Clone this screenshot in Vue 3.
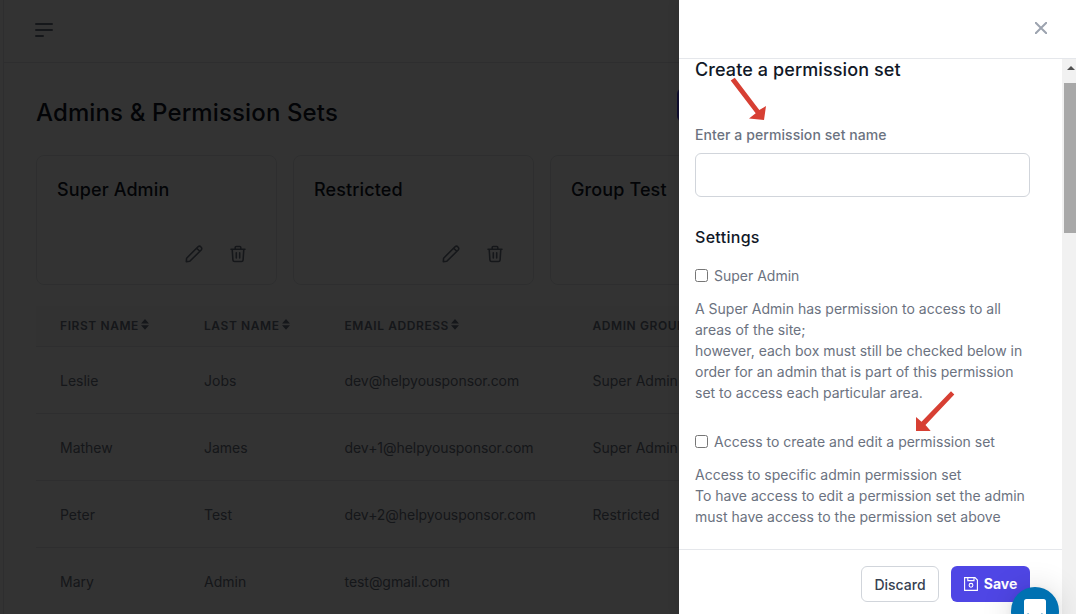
<script setup>
const cards = ['Super Admin', 'Restricted', 'Group Test']
const columns = [
  { label: 'First name', sortable: true },
  { label: 'Last name', sortable: true },
  { label: 'Email address', sortable: true },
  { label: 'Admin group', sortable: false },
]
const rows = [
  ['Leslie', 'Jobs', 'dev@helpyousponsor.com', 'Super Admin'],
  ['Mathew', 'James', 'dev+1@helpyousponsor.com', 'Super Admin'],
  ['Peter', 'Test', 'dev+2@helpyousponsor.com', 'Restricted'],
  ['Mary', 'Admin', 'test@gmail.com', ''],
]
</script>

<template>
  <div class="screen">
    <div class="page">
      <header class="topbar">
        <svg class="menu" width="18" height="14" viewBox="0 0 18 14">
          <path d="M1 1H17M1 7H17M1 13H8" stroke="currentColor" stroke-width="2" stroke-linecap="round" />
        </svg>
      </header>
      <main class="content">
        <div class="title-row">
          <h1>Admins &amp; Permission Sets</h1>
          <button class="create"></button>
        </div>
        <div class="cards">
          <section v-for="card in cards" :key="card" class="card">
            <h2>{{ card }}</h2>
            <div class="card-actions">
              <svg width="20" height="20" viewBox="0 0 20 20" fill="none" stroke="currentColor" stroke-width="1.6" stroke-linecap="round" stroke-linejoin="round">
                <path d="M2.3 17.7L2.6 14.2L14 2.8Q15.6 1.5 17 3Q18.4 4.4 17.2 6L5.8 17.3ZM12.7 4.2L15.8 7.3" />
              </svg>
              <svg width="20" height="20" viewBox="0 0 20 20" fill="none" stroke="currentColor" stroke-width="1.6" stroke-linecap="round" stroke-linejoin="round">
                <path d="M3 5.2H17M4.2 5.2L4.9 16Q5 17.5 6.5 17.5H13.5Q15 17.5 15.1 16L15.8 5.2M7.2 5V3.4Q7.2 2.5 8.1 2.5H11.9Q12.8 2.5 12.8 3.4V5M8.3 8.7V14M11.7 8.7V14" />
              </svg>
            </div>
          </section>
        </div>
        <div class="table">
          <div class="row head">
            <div v-for="col in columns" :key="col.label">
              {{ col.label }}<svg v-if="col.sortable" class="sort" width="8" height="11" viewBox="0 0 8 11">
                <path d="M4 0L8 4.5H0ZM0 6.2H8L4 10.7Z" fill="currentColor" />
              </svg>
            </div>
          </div>
          <div v-for="row in rows" :key="row[2]" class="row">
            <div v-for="(cell, i) in row" :key="i" :class="{ email: i === 2 }">{{ cell }}</div>
          </div>
        </div>
      </main>
    </div>
    <div class="backdrop"></div>

    <aside class="drawer">
      <header class="drawer-head">
        <svg width="12" height="12" viewBox="0 0 12 12">
          <path d="M.7 .7L11.3 11.3M11.3 .7L.7 11.3" stroke="currentColor" stroke-width="2" stroke-linecap="round" />
        </svg>
      </header>
      <div class="drawer-body">
        <div class="panel">
          <form class="form">
            <h3>Create a permission set</h3>
            <label class="field-label" for="set-name">Enter a permission set name</label>
            <input id="set-name" class="field" type="text" />
            <h4>Settings</h4>
            <label class="check"><span class="box"></span>Super Admin</label>
            <p>A Super Admin has permission to access to all<br />areas of the site;<br />however, each box must still be checked below in<br />order for an admin that is part of this permission<br />set to access each particular area.</p>
            <label class="check second"><span class="box"></span>Access to create and edit a permission set</label>
            <p>Access to specific admin permission set<br />To have access to edit a permission set the admin<br />must have access to the permission set above</p>
          </form>
          <footer class="drawer-foot">
            <button class="btn discard">Discard</button>
            <button class="btn save">
              <svg width="14" height="14" viewBox="0 0 14 14" fill="none" stroke="currentColor" stroke-width="1.1">
                <path d="M.6 .6H11L13.4 3V13.4H.6ZM3.8 .6V3.6H10V.6" />
                <circle cx="7" cy="8.3" r="1.9" />
              </svg>
              <span>Save</span>
            </button>
          </footer>
        </div>
        <div class="scrollbar">
          <svg class="up" width="8" height="4" viewBox="0 0 8 4"><path d="M4 0L8 4H0Z" fill="#505050" /></svg>
          <div class="thumb"></div>
        </div>
      </div>
    </aside>

    <svg class="arrows" width="1076" height="614" viewBox="0 0 1076 614" fill="#d73f33">
      <path d="M734.8 77.8L759.3 110L766 106L764 120L749 118.5L755.7 113.3L730.7 80.6Z" />
      <path d="M951 391.3L954.3 394.5L925.5 425L930.7 431H916V417L921.5 421.8Z" />
    </svg>
    <div class="chat">
      <svg width="22" height="24" viewBox="0 0 22 24">
        <path d="M2.5 0H19.5Q22 0 22 2.5V24L17 21H2.5Q0 21 0 18.5V2.5Q0 0 2.5 0Z" fill="#fff" />
        <path d="M4 15.1Q11 20 18 15.1" fill="none" stroke="#0071b2" stroke-width="1.4" stroke-linecap="round" />
      </svg>
    </div>
  </div>
</template>

<style>
body {
  overflow: hidden;
}
</style>

<style scoped>
* {
  box-sizing: border-box;
}
.screen {
  position: relative;
  width: 1076px;
  height: 614px;
  overflow: hidden;
  background: #fff;
  font-family: Inter, "Liberation Sans", sans-serif;
  font-size: 14px;
  line-height: 21px;
  color: #6b7280;
}
h1, h2, h3, h4, p {
  margin: 0;
  font-weight: 500;
}
.page {
  width: 1076px;
  height: 614px;
  padding-left: 3px;
  overflow: hidden;
}
.topbar {
  height: 63px;
  padding: 23px 0 0 31px;
  border-left: 1px solid #e5e7eb;
  border-bottom: 1px solid #e5e7eb;
}
.menu {
  display: block;
}
.content {
  height: 551px;
  padding: 25px 0 0 32px;
  border-left: 1px solid #e5e7eb;
}
.title-row {
  display: flex;
  width: 1000px;
  height: 67px;
}
h1 {
  width: 641px;
  padding-top: 9px;
  font-size: 24px;
  line-height: 32px;
  letter-spacing: .13px;
  color: #111827;
}
.create {
  width: 160px;
  height: 34px;
  padding: 0;
  border: 0;
  border-radius: 6px;
  background: #4f46e5;
}
.cards {
  display: flex;
  gap: 16px;
}
.card {
  flex: none;
  display: flex;
  flex-direction: column;
  justify-content: space-between;
  width: 241px;
  height: 130px;
  padding: 20px 28px 20px 20px;
  border: 1px solid #e5e7eb;
  border-radius: 8px;
}
.card h2 {
  font-size: 18px;
  line-height: 28px;
  letter-spacing: .12px;
  color: #111827;
}
.card-actions {
  display: flex;
  justify-content: flex-end;
  gap: 24px;
}
.table {
  width: 1000px;
  margin-top: 21px;
}
.row {
  display: grid;
  grid-template-columns: 144px 140.5px 248px 1fr;
  align-items: center;
  height: 67px;
  padding-left: 24px;
  border-bottom: 1px solid #e5e7eb;
}
.head {
  height: 41px;
  padding-bottom: 2px;
  background: #f9fafb;
  font-size: 12px;
  font-weight: 600;
  letter-spacing: .58px;
  text-transform: uppercase;
}
.email {
  letter-spacing: -.05px;
}
.sort {
  margin-left: 2.4px;
  vertical-align: 0;
}
.backdrop {
  position: absolute;
  inset: 0;
  background: rgba(0, 0, 0, .8);
}
.drawer {
  position: absolute;
  top: 0;
  right: 0;
  display: flex;
  flex-direction: column;
  width: 397px;
  height: 614px;
  background: #fff;
  box-shadow: 0 0 12px rgba(0, 0, 0, .1);
}
.drawer-head {
  display: flex;
  justify-content: flex-end;
  flex: none;
  height: 59px;
  padding: 22px 29px 0 0;
  border-bottom: 1px solid #e5e7eb;
  color: #9ca3af;
}
.drawer-body {
  display: flex;
  height: 555px;
}
.panel {
  display: flex;
  flex-direction: column;
  width: 383px;
}
.form {
  height: 490px;
  padding: 0 16px;
  overflow: hidden;
  white-space: nowrap;
}
h3 {
  margin-top: -3px;
  font-size: 18px;
  line-height: 28px;
  letter-spacing: .1px;
  color: #111827;
}
.field-label {
  display: block;
  margin-top: 40px;
  font-weight: 500;
  letter-spacing: .08px;
}
.field {
  display: block;
  width: 335px;
  height: 44px;
  margin-top: 8px;
  border: 1px solid #d1d5db;
  border-radius: 6px;
  outline: 0;
}
h4 {
  margin-top: 28px;
  font-size: 16px;
  line-height: 24px;
  letter-spacing: .3px;
  color: #111827;
}
.check {
  display: flex;
  align-items: center;
  gap: 6px;
  margin-top: 16px;
}
.box {
  width: 13px;
  height: 13px;
  border: 1px solid #767676;
  border-radius: 2.5px;
}
.form p {
  margin-top: 12px;
  font-weight: 400;
}
.form .second {
  margin-top: 28px;
}
.drawer-foot {
  display: flex;
  justify-content: flex-end;
  gap: 12px;
  height: 65px;
  padding: 16px 32px 0 0;
  border-top: 1px solid #e5e7eb;
}
.btn {
  display: flex;
  align-items: center;
  justify-content: center;
  height: 36px;
  padding: 0;
  border-radius: 6px;
  font: 500 14px/20px Inter, "Liberation Sans", sans-serif;
}
.discard {
  width: 78px;
  padding-top: 2px;
  border: 1px solid #d1d5db;
  background: #fff;
  color: #374151;
}
.save {
  gap: 6px;
  width: 79px;
  border: 0;
  background: #4f46e5;
  color: #fff;
  font-weight: 700;
}
.scrollbar {
  width: 14px;
  padding: 7px 0 0 2px;
  background: #f1f1f1;
}
.up {
  display: block;
  margin-left: 3px;
}
.thumb {
  width: 12px;
  height: 150px;
  margin-top: 13px;
  background: #a8a8a8;
}
.arrows {
  position: absolute;
  top: 0;
  left: 0;
  pointer-events: none;
}
.chat {
  position: absolute;
  top: 587px;
  left: 1011px;
  display: flex;
  justify-content: center;
  width: 48px;
  height: 48px;
  padding-top: 12px;
  border-radius: 50%;
  background: #0071b2;
  box-shadow: 0 1px 6px rgba(0, 0, 0, .06), 0 2px 32px rgba(0, 0, 0, .16);
}
</style>
